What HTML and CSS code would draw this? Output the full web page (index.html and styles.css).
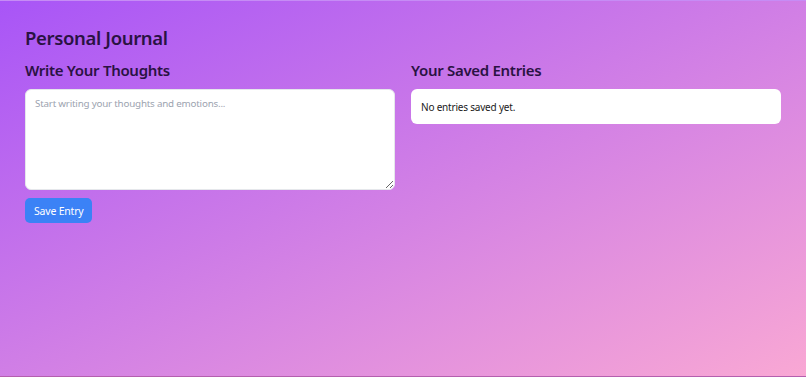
FILE: index.html
```html
<!DOCTYPE html>
<html lang="en">
<head>
<meta charset="utf-8">
<title>Personal Journal</title>
<link rel="stylesheet" href="styles.css">
</head>
<body>
<div class="page">
  <h1 class="title">Personal Journal</h1>
  <div class="columns">
    <section class="col">
      <h2 class="heading">Write Your Thoughts</h2>
      <textarea class="entry" placeholder="Start writing your thoughts and emotions..."></textarea>
      <button class="save">Save Entry</button>
    </section>
    <section class="col">
      <h2 class="heading">Your Saved Entries</h2>
      <div class="entries">No entries saved yet.</div>
    </section>
  </div>
</div>
</body>
</html>
```

FILE: styles.css
```css
html, body {
  margin: 0;
  height: 100%;
}
body {
  font-family: "Noto Sans", "Open Sans", sans-serif;
  background: linear-gradient(to bottom right, #a855f7, #f9a8d4);
  border-top: 1px solid #c68cf5;
  border-bottom: 1px solid #b45fae;
  box-sizing: border-box;
  color: #2a1243;
}
.page {
  padding: 23px 25px;
}
.title {
  margin: 0 0 4px;
  font-size: 18.5px;
  letter-spacing: -0.35px;
  line-height: 28px;
  font-weight: 600;
}
.columns {
  display: grid;
  grid-template-columns: 1fr 1fr;
  gap: 16px;
}
.col {
  display: flex;
  flex-direction: column;
  align-items: flex-start;
}
.heading {
  margin: 0 0 5px;
  font-size: 15px;
  letter-spacing: -0.3px;
  line-height: 28px;
  font-weight: 600;
}
.entry {
  box-sizing: border-box;
  width: 100%;
  height: 101px;
  border: 1px solid #e5e7eb;
  border-radius: 6px;
  padding: 6px 9px;
  font-family: inherit;
  font-size: 9.8px;
  letter-spacing: -0.2px;
  line-height: 16px;
  color: #111;
  background: #fff;
  outline: none;
}
.entry::placeholder {
  color: #9ca3af;
}
.save {
  margin-top: 8px;
  height: 25px;
  padding: 0 9px;
  border: none;
  border-radius: 5px;
  background: #3b82f6;
  color: #fff;
  font-family: inherit;
  font-size: 10.5px;
  letter-spacing: -0.2px;
}
.entries {
  box-sizing: border-box;
  width: 100%;
  height: 35px;
  display: flex;
  align-items: center;
  padding: 0 10px;
  background: #fff;
  border-radius: 6px;
  font-size: 10px;
  letter-spacing: -0.2px;
  color: #1a1a1a;
}
```
